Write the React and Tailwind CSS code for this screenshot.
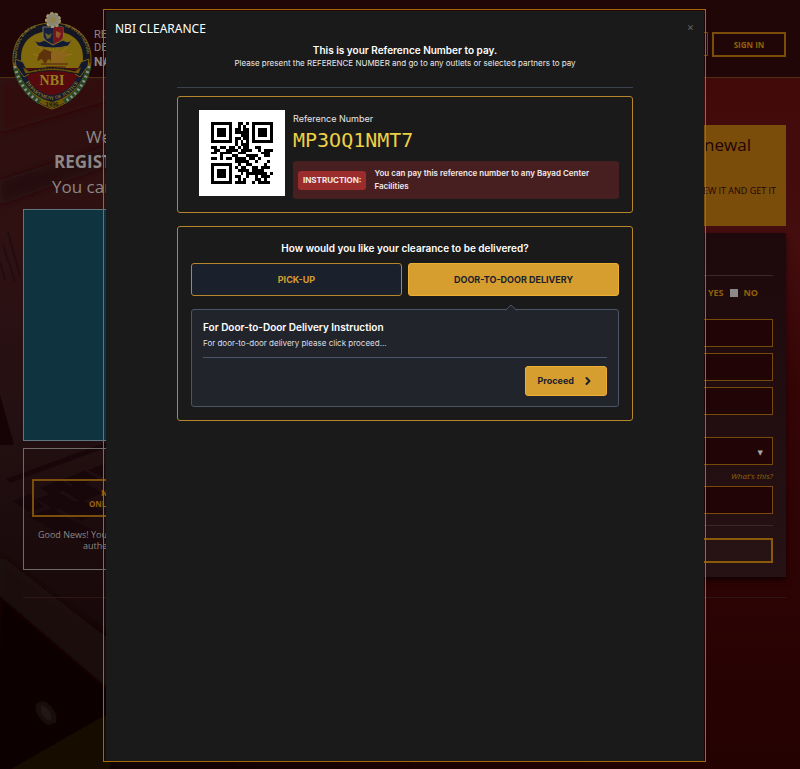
import { ChevronRight } from "lucide-react";

const QR_ROWS = [
  "111111100110101111111",
  "100000100101001000001",
  "101110101101101011101",
  "101110101111101011101",
  "101110100011101011101",
  "100000101101101000001",
  "111111101010101111111",
  "000000001011100000000",
  "110110110101100110000",
  "011001111011110010111",
  "110111100111000001110",
  "000100011000111100110",
  "110101101111011010000",
  "000000001111100100010",
  "111111100100110000100",
  "100000101011001101110",
  "101110100111101111000",
  "101110100010111111101",
  "101110101100100101110",
  "100000100101000110100",
  "111111101111001011110",
];

function QrCode() {
  return (
    <svg viewBox="0 0 21 21" className="size-full" shapeRendering="crispEdges" role="img" aria-label="QR code">
      {QR_ROWS.map((row, y) =>
        [...row].map((cell, x) =>
          cell === "1" ? <rect key={`${x}-${y}`} x={x} y={y} width="1" height="1" fill="#000" /> : null
        )
      )}
    </svg>
  );
}

function Seal() {
  return (
    <svg viewBox="0 0 80 100" className="h-[100px] w-20 shrink-0" role="img" aria-label="NBI seal">
      <defs>
        <path id="seal-top" d="M5 48C5 26 18 15 39 15C61 15 75 26 75 48" />
        <path id="seal-bottom" d="M9 60C13 78 26 88 40 90C54 88 67 78 71 60" />
        <path id="seal-year" d="M25 94Q40 99 55 94" />
        <clipPath id="seal-inner">
          <path d="M9 48C9 30 22 21 40 21S71 30 71 48C71 68 58 82 40 87C22 82 9 68 9 48Z" />
        </clipPath>
      </defs>
      <path d="M1 49C1 27 17 13 40 13S79 27 79 49C79 74 60 93 40 99C20 93 1 74 1 49Z" fill="#141722" stroke="#7c610c" strokeWidth="1" />
      <path d="M1 52C4 76 20 92 40 98C60 92 76 76 79 52L75 54C72 73 57 88 40 92C23 88 8 73 5 54Z" fill="#6e5808" />
      <path d="M3 56C7 74 16 85 28 92M77 56C73 74 64 85 52 92" fill="none" stroke="#294825" strokeWidth="5" />
      <path d="M3 56C7 74 16 85 28 92M77 56C73 74 64 85 52 92" fill="none" stroke="#90918a" strokeWidth="3" strokeDasharray="2 3" />
      <g clipPath="url(#seal-inner)">
        <rect x="8" y="20" width="64" height="42" fill="#80680d" />
        <path d="M8 58H72V90H8Z" fill="#560a0d" />
        <g stroke="#967521" strokeWidth="1">
          <path d="M40 49 25 35M40 49 31 33M40 49 36 31M40 49 43 31M40 49 49 33M40 49 56 37M40 49 21 44M40 49 60 44" />
        </g>
        <path d="M27 44l5-5 8 3 4 7-3 3-5-3-3 6-3-6-5 2z" fill="#5e320b" />
        <path d="M39 43l5-4 4 4 5-3 2 5-3 3 1 6-6-2-6 3-2-5z" fill="#8c641c" />
        <path d="M29 54h27M34 57h20" stroke="#6b4110" strokeWidth="2" />
      </g>
      <path d="M10 60C14 77 27 86 40 88C53 86 66 77 70 60" fill="none" stroke="#141b31" strokeWidth="5" />
      <path d="M3 49l8 3 6 12-5 3-8-11zM77 49l-8 3-6 12 5 3 8-11z" fill="#111830" stroke="#7b5e10" strokeWidth="1" />
      <path d="M10 56l7 5Q40 54 63 61l7-5-3 8-6-1Q40 58 19 63l-6 1z" fill="#70520b" stroke="#151620" strokeWidth="1" />
      <path d="M25 60Q40 57 56 60" stroke="#24190d" strokeWidth="1" strokeDasharray="2 1" fill="none" />
      <path d="M31 17H51V27Q49 32 41 35Q33 32 31 27Z" fill="#18213c" stroke="#777064" strokeWidth="1" />
      <path d="M41 17H51V27Q49 32 41 34Z" fill="#75171a" />
      <path d="M33 23l4 2 3-2-2 5-3 1z" fill="#67602b" />
      <path d="M44 21l5 2-2 5-3-1z" fill="#8d552c" />
      <path d="M22 30q5 4 10 0l9 5 10-5q5 4 10-1l-5 7q-15 4-30 0z" fill="#101a35" stroke="#80671b" strokeWidth="1" />
      <circle cx="41" cy="10" r="7" fill="#888775" stroke="#a79b68" strokeWidth="2" strokeDasharray="3 2" />
      <circle cx="41" cy="10" r="3" fill="#938149" />
      <text fontFamily="Liberation Sans" fontSize="4" fontWeight="700" fill="#8b7629">
        <textPath href="#seal-top">NATIONAL BUREAU</textPath>
      </text>
      <text fontFamily="Liberation Sans" fontSize="4" fontWeight="700" fill="#8b7629">
        <textPath href="#seal-top" startOffset="62%">OF INVESTIGATION</textPath>
      </text>
      <text fontFamily="Liberation Serif" fontSize="5" fontWeight="700" fill="#8c741d">
        <textPath href="#seal-bottom" startOffset="50%" textAnchor="middle">DEPARTMENT OF JUSTICE</textPath>
      </text>
      <text x="40" y="75" textAnchor="middle" fontFamily="Liberation Serif" fontSize="14" fontWeight="700" fill="#95801f">NBI</text>
      <text fontFamily="Liberation Sans" fontSize="6" fontWeight="700" fill="#171512">
        <textPath href="#seal-year" startOffset="50%" textAnchor="middle">1936</textPath>
      </text>
    </svg>
  );
}

function Backdrop() {
  return (
    <svg viewBox="0 0 800 769" preserveAspectRatio="none" className="absolute inset-0 size-full" aria-hidden="true">
      <defs>
        <linearGradient id="bg-left" x1="0" y1="0" x2="0" y2="1">
          <stop offset="0" stopColor="#2d0d0e" />
          <stop offset="0.3" stopColor="#301112" />
          <stop offset="0.55" stopColor="#231012" />
          <stop offset="0.72" stopColor="#1b0b0c" />
          <stop offset="1" stopColor="#120304" />
        </linearGradient>
        <linearGradient id="bg-right" x1="0" y1="0" x2="0" y2="1">
          <stop offset="0" stopColor="#420808" />
          <stop offset="0.32" stopColor="#440d0e" />
          <stop offset="0.5" stopColor="#350506" />
          <stop offset="1" stopColor="#240202" />
        </linearGradient>
        <linearGradient id="bg-fade">
          <stop offset="0.2" stopColor="#000" />
          <stop offset="0.85" stopColor="#fff" />
        </linearGradient>
        <mask id="bg-mask">
          <rect width="800" height="769" fill="url(#bg-fade)" />
        </mask>
        <filter id="soft">
          <feGaussianBlur stdDeviation="3" />
        </filter>
      </defs>
      <rect width="800" height="769" fill="url(#bg-left)" />
      <g filter="url(#soft)">
        <path d="M0 133 110 100V78H0Z" fill="#300808" />
        <path d="M0 180 110 145V165L0 205Z" fill="#260d0f" />
        <path d="M0 565 110 635V780H-9Z" fill="#110405" />
        <path d="M0 555 110 640V690L0 596Z" fill="#1a0b08" />
        <path d="M0 600 60 655 80 700 40 720 0 710Z" fill="#100305" />
        <path d="M0 775 110 712V775Z" fill="#170706" />
        <ellipse cx="46" cy="713" rx="6" ry="12" transform="rotate(-35 46 713)" fill="#231412" />
      </g>
      <circle cx="32" cy="181" r="7" fill="none" stroke="#270d0f" strokeWidth="3" />
      <path d="M3 245l12 36M8 232l12 44M0 262l5 18" stroke="#210d0f" strokeWidth="2" />
      <path d="M0 395 14 445H0Z" fill="#150306" />
      <path d="M6 479 110 441V446L10 483Z" fill="#18070a" />
      <g fill="#18070a">
        <path d="M40 488l20-8 12 7-21 8zM63 479l22-8 13 7-22 9zM88 470l17-6v14zM13 501l17-7 14 13-15 5zM37 499l20-8 18 11-20 8zM62 490l21-8 20 11-22 9zM28 516l24-8 18 12-21 7zM57 507l24-7 24 12-24 9zM44 526l24-8 36 17v15z" />
      </g>
      <rect width="800" height="769" fill="url(#bg-right)" mask="url(#bg-mask)" />
    </svg>
  );
}

function TextField({ label }) {
  return <input type="text" aria-label={label} className="h-7 w-full border border-[#774a0a] bg-[#200406] px-2 text-[#888]" />;
}

function Page() {
  return (
    <div className="relative min-h-screen bg-[#160405] font-['Open_Sans','Noto_Sans',sans-serif] text-[#8c8787]">
      <Backdrop />
      <div className="relative">
        <header className="flex h-[78px] items-start justify-between border-b border-[#502e12] bg-[#200607] pr-[14px] pl-3">
          <div className="flex gap-[2px] pt-[10px]">
            <Seal />
            <div className="pt-[18px] font-[Roboto,sans-serif] text-[11px] leading-[13px]">
              <p>REP</p>
              <p>DEP</p>
              <p className="text-[12px] leading-4 font-bold">NAT</p>
            </div>
          </div>
          <div className="flex gap-1 pt-8 text-[8px] font-bold text-[#936009]">
            <button type="button" aria-label="Register" className="h-6 w-[74px] border border-[#6d4407]" />
            <button type="button" className="h-[25px] w-[74px] border-2 border-[#7b4d08]">SIGN IN</button>
          </div>
        </header>

        <main className="mr-[14px] ml-[23px] flex justify-between border-b border-[#301516] pb-5">
          <section className="w-[360px] pt-[46px]">
            <div className="text-[17px] leading-[25px]">
              <p className="pl-[63px]">Welcome</p>
              <p className="pl-[31px] font-bold">REGISTER</p>
              <p className="pl-[29px]">You can</p>
            </div>
            <div className="mt-[10px] h-[232px] border border-[#5e777d] bg-[#0f3440]" />
            <div className="mt-[7px] h-[122px] border border-[#706969] px-2 pt-[30px] text-[9px] leading-[11px]">
              <button type="button" className="block h-[38px] w-full border-2 border-[#7b4e0c] text-left text-[8px] leading-[11px] font-bold text-[#936009]">
                <span className="block pl-[67px]">NBI</span>
                <span className="block pl-[55px]">ONLINE</span>
              </button>
              <p className="mt-3 pl-[6px]">Good News! Your</p>
              <p className="pl-[51px]">authenticated</p>
            </div>
          </section>

          <section className="w-[370px] pt-[47px]">
            <div className="h-[101px] bg-[#7b4d0a] text-right text-[#200607]">
              <h2 className="pt-2 pr-[35px] text-[17px] leading-[23px]">Renewal</h2>
              <p className="mt-[29px] pr-[10px] text-[9px] leading-3">RENEW IT AND GET IT</p>
            </div>
            <form className="mt-[7px] h-[344px] bg-linear-to-b from-[#1d090b] to-[#261214] px-[13px] pt-[42px] shadow-md shadow-black/50">
              <div className="flex h-11 items-start justify-end gap-[6px] border-t border-[#3c2829] pt-[11px] pr-[15px] text-[9px] leading-3 font-bold text-[#936009]">
                <label htmlFor="yes">YES</label>
                <input id="yes" type="checkbox" className="mt-[2px] size-2 appearance-none bg-[#8d8888]" />
                <label htmlFor="no">NO</label>
                <input id="no" type="checkbox" className="sr-only" />
              </div>
              <div className="flex flex-col gap-[6px]">
                <TextField label="First name" />
                <TextField label="Middle name" />
                <TextField label="Last name" />
              </div>
              <div className="relative mt-[22px]">
                <select aria-label="Type" className="block h-7 w-full appearance-none border border-[#774a0a] bg-[#200406]" />
                <span className="pointer-events-none absolute top-2 right-[10px] font-['DejaVu_Sans',sans-serif] text-[7px] leading-4 text-[#aaa5a5]">▼</span>
              </div>
              <a href="#help" className="mt-[5px] mb-1 block text-right text-[8px] leading-3 text-[#936009] italic">What's this?</a>
              <TextField label="Answer" />
              <div className="mt-[11px] border-t border-[#3c2829] pt-3">
                <button type="button" aria-label="Submit" className="block h-[25px] w-full border-2 border-[#8a5909] bg-[#271214]" />
              </div>
            </form>
          </section>
        </main>
      </div>
    </div>
  );
}

function ReferenceCard() {
  return (
    <section className="mt-2 flex gap-2 rounded-[3px] border border-[#b7852b] py-[13px] pr-[13px] pl-[21px]">
      <div className="size-[86px] shrink-0 bg-white p-3">
        <QrCode />
      </div>
      <div className="min-w-0 flex-1">
        <p className="mt-[3px] text-[9px] leading-3 text-[#e8e8e8]">Reference Number</p>
        <p className="mt-[3px] font-['DejaVu_Sans_Mono',monospace] text-[20px] leading-6 text-[#ecd046]">MP3OQ1NMT7</p>
        <div className="mt-[9px] flex h-[38px] items-center gap-2 rounded-[3px] bg-[#471f20] pr-2 pl-[5px] text-[#f0eaea]">
          <span className="rounded-[3px] bg-[#9b2c2c] px-[5px] text-[8px] leading-[19px] font-bold whitespace-nowrap">INSTRUCTION:</span>
          <p className="max-w-[220px] text-[8px] leading-[13px] font-semibold">You can pay this reference number to any Bayad Center Facilities</p>
        </div>
      </div>
    </section>
  );
}

function DeliveryCard() {
  return (
    <section className="mt-[13px] rounded-[3px] border border-[#b7852b] p-[13px]">
      <h3 className="text-center text-[10px] leading-4 font-semibold text-white">How would you like your clearance to be delivered?</h3>
      <div className="mt-[7px] grid grid-cols-2 gap-[6px] text-[9px] font-bold">
        <button type="button" className="h-[33px] rounded-[3px] border border-[#b7852b] bg-[#1a202c] text-[#d69e2e]">PICK-UP</button>
        <button type="button" className="h-[33px] rounded-[3px] border border-[#ecaf32] bg-[#d69e2e] text-[#1a202c]">DOOR-TO-DOOR DELIVERY</button>
      </div>
      <div className="relative mt-[13px] rounded-[3px] border border-[#4a5568] bg-[#22242c] px-[11px] pt-[10px] pb-[10px]">
        <svg viewBox="0 0 12 7" className="absolute right-[101px] bottom-full h-[7px] w-3 translate-y-px" aria-hidden="true">
          <path d="M0 7 6 1 12 7Z" fill="#22242c" />
          <path d="M0 6.500 6 1 12 6.500" fill="none" stroke="#4a5568" />
        </svg>
        <h4 className="text-[10px] leading-[14px] font-semibold text-white">For Door-to-Door Delivery Instruction</h4>
        <p className="mt-[3px] text-[8px] leading-3 text-[#dedfe2]">For door-to-door delivery please click proceed...</p>
        <div className="mt-2 flex justify-end border-t border-[#4a5568] pt-2">
          <button type="button" className="flex h-[30px] items-center gap-2 rounded-[3px] border border-[#ecaf32] bg-[#d69e2e] px-3 text-[9px] font-bold text-[#1a202c]">
            Proceed
            <ChevronRight className="size-3" strokeWidth={4} />
          </button>
        </div>
      </div>
    </section>
  );
}

export default function App() {
  return (
    <>
      <Page />
      <div className="fixed inset-0 flex pt-[9px] pr-[94px] pb-[7px] pl-[103px]">
        <div role="dialog" aria-label="NBI Clearance" className="flex flex-1 border border-[#a8690a] pt-px pr-px pl-[2px]">
          <div className="relative flex-1 bg-[#1a1a1a] font-[Inter,sans-serif] text-white">
            <h1 className="pt-[10px] pl-[9px] font-['Noto_Sans',sans-serif] text-[12px] leading-4">NBI CLEARANCE</h1>
            <button type="button" aria-label="Close" className="absolute top-[10px] right-[10px] text-[11px] leading-3 text-[#626262]">
              ×
            </button>
            <div className="mx-auto w-full max-w-[456px]">
              <div className="border-b border-[#3b424e] pt-[6px] pb-[18px] text-center">
                <h2 className="text-[10px] leading-[14px] font-semibold">This is your Reference Number to pay.</h2>
                <p className="text-[8px] leading-3 text-[#e9e9e9]">Please present the REFERENCE NUMBER and go to any outlets or selected partners to pay</p>
              </div>
              <ReferenceCard />
              <DeliveryCard />
            </div>
          </div>
        </div>
      </div>
    </>
  );
}
